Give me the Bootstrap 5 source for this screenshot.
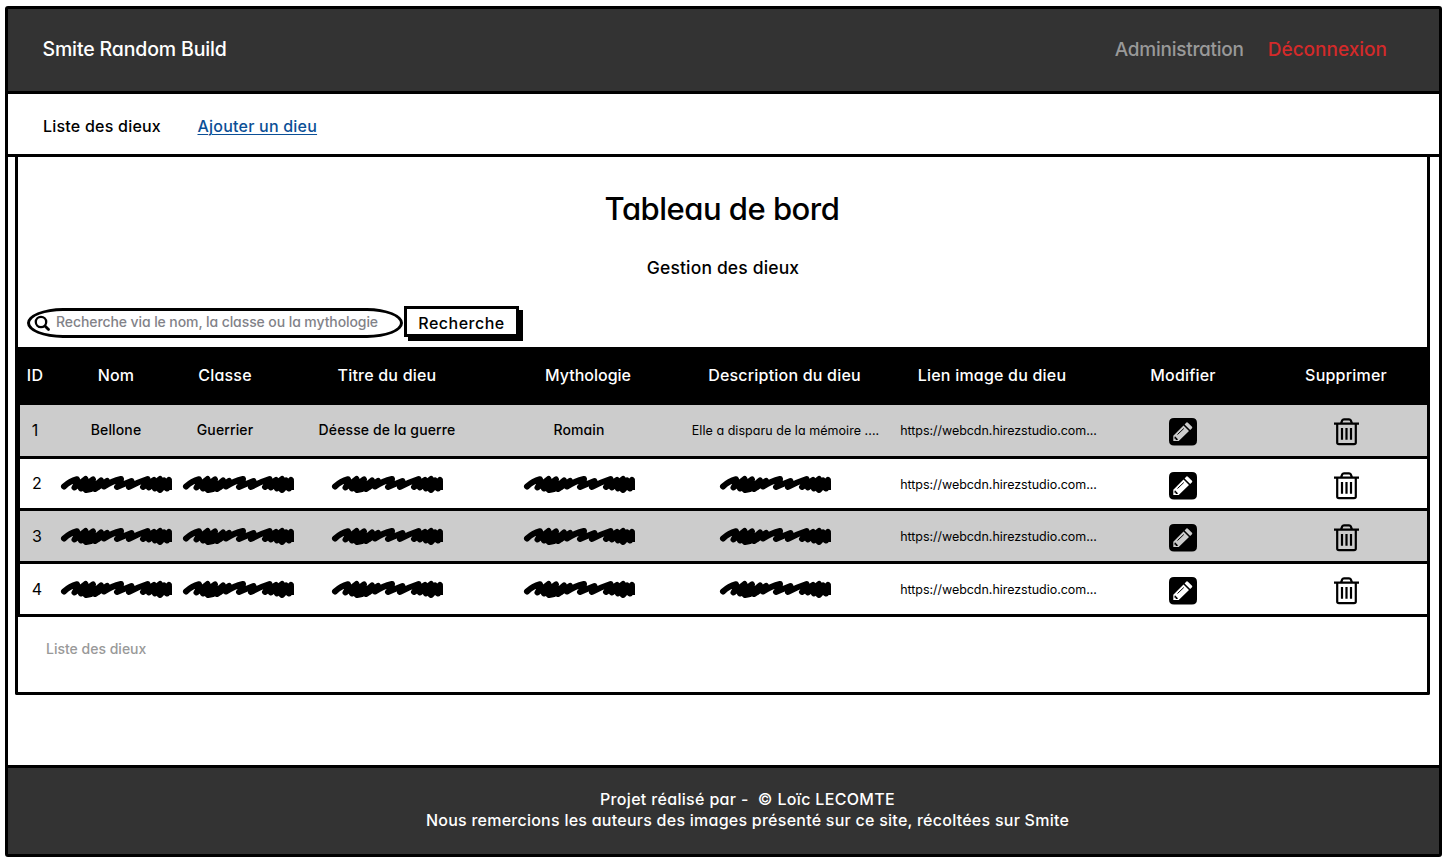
<!DOCTYPE html>
<html lang="fr">
<head>
<meta charset="utf-8">
<meta name="viewport" content="width=device-width, initial-scale=1">
<title>Smite Random Build</title>
<link href="https://cdn.jsdelivr.net/npm/bootstrap@5.3.0/dist/css/bootstrap.min.css" rel="stylesheet">
<style>
  body { font-family: Inter, "Liberation Sans", sans-serif; font-feature-settings: "cv11"; color: #000; background: #fff; overflow: hidden; }
  .site { margin: 6px 5px 0; width: 1437px; height: 851px; border: 3px solid #000; border-radius: 3px; }
  .topbar { height: 85px; background: #333; border-bottom: 3px solid #000; padding: 0 52px 0 34.5px; font-size: 20px; }
  .topbar .navbar-brand { color: #fff; font-size: 19.5px; font-weight: 500; letter-spacing: -.15px; }
  .topbar a { font-size: 19px; font-weight: 500; text-decoration: none; line-height: 24px; }
  .link-admin { color: #999; letter-spacing: -.25px; }
  .link-out { color: #d32a2a; }
  .subnav { height: 63px; border-bottom: 3px solid #000; padding: 4px 35px 0; font-size: 16px; font-weight: 500; letter-spacing: .22px; gap: 36.5px; }
  .subnav a { color: #0b4f96; text-underline-offset: 2px; text-decoration-thickness: 1px; }
  .panel { height: 538px; margin: 0 9px 0 7px; border: solid #000; border-width: 0 3px 3px; border-radius: 0 0 2px 2px; }
  .panel h1 { font-size: 31px; font-weight: 500; letter-spacing: -.5px; line-height: 40px; padding: 32px 1px 0 0; margin: 0; }
  .panel h2 { font-size: 17.5px; font-weight: 500; letter-spacing: .15px; line-height: 24px; margin: 27px 0 26px; padding-left: 1px; }
  .searchbar { height: 35px; margin: 0 0 6px 9px; gap: 2px; }
  .searchbox { width: 376px; height: 30px; margin-top: 2px; border: 3px solid #000; border-radius: 36px / 15px; padding-left: 4px; }
  .searchbox input { font-size: 14px; font-weight: 500; font-feature-settings: "cv11"; color: #828288; letter-spacing: -.09px; padding: 0 0 2px 5px; border: 0; background: none; box-shadow: none; line-height: 20px; }
  .searchbox input::placeholder { color: #828288; opacity: 1; }
  .btn-sketch { width: 115px; height: 31px; margin-left: -1px; border: 3px solid #000; border-radius: 0; background: #fff; box-shadow: 4px 4px 0 #000; font-feature-settings: "cv11"; font-size: 16px; font-weight: 500; letter-spacing: .5px; line-height: 20px; padding: 4px 0 0; color: #000; }
  .gods { width: 1415px; margin: 0 -3px; table-layout: fixed; caption-side: bottom; border: solid #000; border-width: 0 3px 0 5px; border-collapse: separate; border-spacing: 0; text-align: center; vertical-align: middle; color: #000; }
  .gods th, .gods td { padding: 0; white-space: nowrap; border: 0 solid #000; color: #000; }
  .gods thead th { height: 58px; background: #000; color: #fff; font-size: 16px; font-weight: 500; letter-spacing: .2px; padding-bottom: 2px; }
  .gods thead .myth { letter-spacing: 0; padding-left: 2px; }
  .gods thead .desc { padding-left: 1px; }
  .gods tbody td { height: 53px; border-bottom-width: 3px; font-size: 14px; font-weight: 500; letter-spacing: .13px; line-height: 20px; }
  .gods tbody tr:first-child td { height: 54px; padding-bottom: 2px; }
  .gods tbody tr:nth-child(2) td { height: 52px; }
  .gods tbody tr:nth-child(odd) td { background: #ccc; }
  .gods tbody .num { font-size: 16px; font-weight: 400; padding: 0 0 1px 1px; }
  .gods thead th:first-child, .gods tbody tr:first-child .num { padding-left: 0; padding-right: 3px; }
  .gods .titre, .gods thead .classe, .gods tbody tr:first-child .classe { padding-right: 26px; }
  .gods tbody .myth { padding-right: 16px; }
  .gods tbody .desc { padding-right: 18px; }
  .gods tbody tr:first-child .desc { padding: 0 0 0 3px; font-size: 12.5px; font-weight: 400; letter-spacing: .05px; }
  .gods tbody .url { font-size: 12.5px; font-weight: 400; letter-spacing: -.04px; padding-top: 2px; }
  .gods thead .url, .gods .edit { padding-right: 13px; }
  .gods .drop { padding-right: 14px; }
  .gods tbody .edit, .gods tbody .drop { padding-top: 4px; }
  .gods svg { display: block; margin: 0 auto; }
  .gods caption { font-size: 14px; font-weight: 500; letter-spacing: 0; color: #999; padding: 21px 0 0 31px; }
  .foot { height: 89px; background: #333; border-top: 3px solid #000; color: #fff; font-size: 16px; font-weight: 500; line-height: 21px; padding-top: 21px; }
  .foot p { margin: 0; white-space: pre; letter-spacing: .25px; padding-left: 48px; }
  .foot p:first-child { letter-spacing: .33px; }
</style>
</head>
<body>
<svg width="0" height="0" class="position-absolute" aria-hidden="true">
  <symbol id="scribble" viewBox="0 0 113 22"><path d="M4 13.500Q10 8 17 6.200Q18 9 14.500 14.500L25.500 6L21 15.500L33 6.500L26 17L31 16L41 7.500L35 16L47 8L44 13.500Q52 8 61 6Q61 10 57 14Q64 11 71.500 8Q71 11 69 14Q78 9 87.500 6Q87 10 83 14L94 7L89 14.500L100 6L95 15.500L104 7.500L100 17L109 7L107 15.500" fill="none" stroke="#000" stroke-width="6" stroke-linecap="round" stroke-linejoin="round"/><path d="M23 8L45 8L39 17H24ZM94 8H112V17H98Z"/></symbol>
  <symbol id="pencil" viewBox="0 0 28 28"><path fill-rule="evenodd" d="M5 0H23Q28 0 28 5V22.500Q28 27.500 23 27.500H5Q0 27.500 0 22.500V5Q0 0 5 0ZM4.300 17.800V23H9.700L20 13L14.500 7.500ZM15.600 6.400L21.200 12L23 10.200Q23.600 9.500 23 8.800L18.900 4.700Q18.100 4 17.400 4.600Z"/><path d="M8.500 16.500L14.800 10.500" stroke="#000" stroke-width="1"/><path d="M6 18.300L9.200 21.500L7.800 22H6.700V20.700H5.500V19.300Z"/></symbol>
  <symbol id="trash" viewBox="0 0 25 28"><g fill="none" stroke="#000" stroke-width="2.200"><path d="M0 5.700H25M3.200 6V24.500Q3.200 26.200 5 26.200H20Q21.800 26.200 21.800 24.500V6M7 5.500L8.300 2.200Q8.700 1.300 10 1.300H15Q16.300 1.300 16.700 2.200L18 5.500"/><path d="M8 10V21.700M12.500 10V21.700M17 10V21.700"/></g></symbol>
</svg>
<div class="site d-flex flex-column">
  <header class="topbar d-flex align-items-center justify-content-between">
    <span class="navbar-brand p-0 m-0">Smite Random Build</span>
    <nav class="d-flex gap-4"><a class="link-admin" href="#">Administration</a><a class="link-out" href="#">Déconnexion</a></nav>
  </header>
  <nav class="subnav d-flex align-items-center"><span>Liste des dieux</span><a href="#">Ajouter un dieu</a></nav>
  <main class="flex-grow-1">
    <section class="panel">
      <h1 class="text-center">Tableau de bord</h1>
      <h2 class="text-center">Gestion des dieux</h2>
      <form class="searchbar d-flex align-items-start">
        <div class="searchbox d-flex align-items-center">
          <svg width="17" height="17" viewBox="0 0 17 17" class="flex-shrink-0" fill="none" stroke="#000"><circle cx="7" cy="7" r="5.200" stroke-width="2.300"/><path d="M11 11L14.500 14.500" stroke-width="2.800" stroke-linecap="round"/></svg>
          <input class="form-control" type="text" placeholder="Recherche via le nom, la classe ou la mythologie">
        </div>
        <button class="btn btn-sketch d-flex justify-content-center" type="button">Recherche</button>
      </form>
      <table class="gods">
        <colgroup><col style="width:33px"><col style="width:126px"><col style="width:118px"><col style="width:206px"><col style="width:168px"><col style="width:226px"><col style="width:203px"><col style="width:179px"><col style="width:148px"></colgroup>
        <caption class="text-start">Liste des dieux</caption>
        <thead><tr><th>ID</th><th>Nom</th><th class="classe">Classe</th><th class="titre">Titre du dieu</th><th class="myth">Mythologie</th><th class="desc">Description du dieu</th><th class="url">Lien image du dieu</th><th class="edit">Modifier</th><th class="drop">Supprimer</th></tr></thead>
        <tbody>
          <tr><td class="num">1</td><td>Bellone</td><td class="classe">Guerrier</td><td class="titre">Déesse de la guerre</td><td class="myth">Romain</td><td class="desc">Elle a disparu de la mémoire ....</td><td class="url">https://webcdn.hirezstudio.com...</td><td class="edit"><svg width="28" height="28"><use href="#pencil"/></svg></td><td class="drop"><svg width="25" height="28"><use href="#trash"/></svg></td></tr>
          <tr><td class="num">2</td><td><svg width="113" height="22"><use href="#scribble"/></svg></td><td><svg width="113" height="22"><use href="#scribble"/></svg></td><td class="titre"><svg width="113" height="22"><use href="#scribble"/></svg></td><td class="myth"><svg width="113" height="22"><use href="#scribble"/></svg></td><td class="desc"><svg width="113" height="22"><use href="#scribble"/></svg></td><td class="url">https://webcdn.hirezstudio.com...</td><td class="edit"><svg width="28" height="28"><use href="#pencil"/></svg></td><td class="drop"><svg width="25" height="28"><use href="#trash"/></svg></td></tr>
          <tr><td class="num">3</td><td><svg width="113" height="22"><use href="#scribble"/></svg></td><td><svg width="113" height="22"><use href="#scribble"/></svg></td><td class="titre"><svg width="113" height="22"><use href="#scribble"/></svg></td><td class="myth"><svg width="113" height="22"><use href="#scribble"/></svg></td><td class="desc"><svg width="113" height="22"><use href="#scribble"/></svg></td><td class="url">https://webcdn.hirezstudio.com...</td><td class="edit"><svg width="28" height="28"><use href="#pencil"/></svg></td><td class="drop"><svg width="25" height="28"><use href="#trash"/></svg></td></tr>
          <tr><td class="num">4</td><td><svg width="113" height="22"><use href="#scribble"/></svg></td><td><svg width="113" height="22"><use href="#scribble"/></svg></td><td class="titre"><svg width="113" height="22"><use href="#scribble"/></svg></td><td class="myth"><svg width="113" height="22"><use href="#scribble"/></svg></td><td class="desc"><svg width="113" height="22"><use href="#scribble"/></svg></td><td class="url">https://webcdn.hirezstudio.com...</td><td class="edit"><svg width="28" height="28"><use href="#pencil"/></svg></td><td class="drop"><svg width="25" height="28"><use href="#trash"/></svg></td></tr>
        </tbody>
      </table>
    </section>
  </main>
  <footer class="foot text-center"><p>Projet réalisé par -  © Loïc LECOMTE</p><p>Nous remercions les auteurs des images présenté sur ce site, récoltées sur Smite</p></footer>
</div>
<script src="https://cdn.jsdelivr.net/npm/bootstrap@5.3.0/dist/js/bootstrap.bundle.min.js"></script>
</body>
</html>
